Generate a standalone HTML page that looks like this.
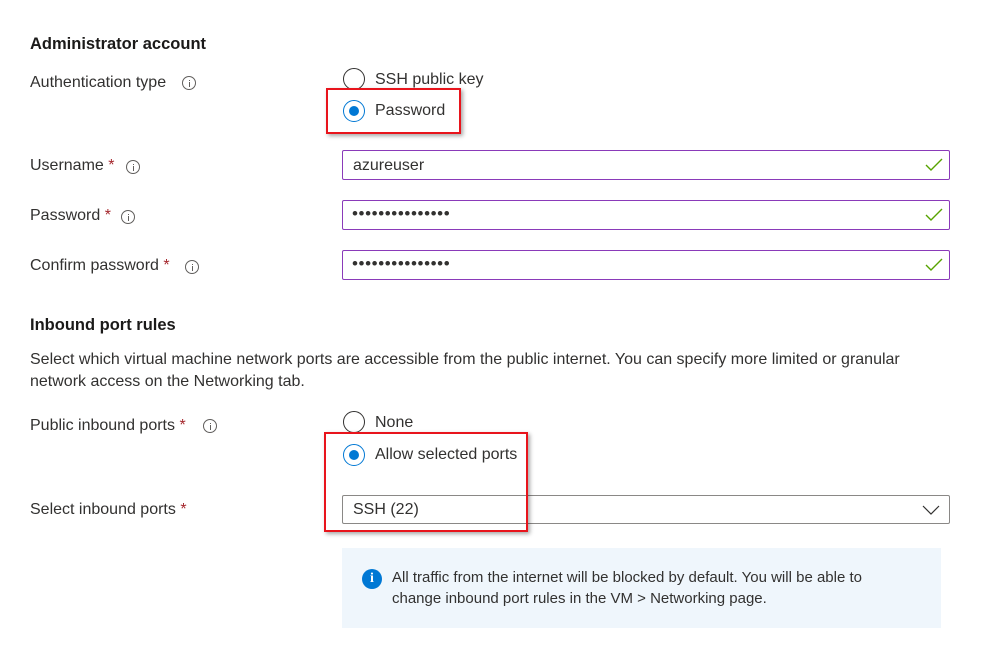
<!DOCTYPE html>
<html><head><meta charset="utf-8"><style>
*{margin:0;padding:0;box-sizing:border-box}
body{width:983px;height:652px;background:#fff;position:relative;overflow:hidden;font-family:"Liberation Sans",sans-serif;font-size:16px;color:#323130}
.a{position:absolute;white-space:nowrap;line-height:20px}
.h{font-weight:bold;font-size:16.5px;color:#1b1a19}
.req{color:#a4262c}
.info{position:absolute;width:14px;height:14px;border:1px solid #605e5c;border-radius:50%}
.info:after{content:"";position:absolute;left:5.5px;top:5px;width:1px;height:5px;background:#605e5c}
.info:before{content:"";position:absolute;left:5.5px;top:2.5px;width:1px;height:1px;background:#605e5c}
.rad{position:absolute;width:22px;height:22px;border:1px solid #323130;border-radius:50%}
.rad.on{border-color:#0078d4}
.rad.on:after{content:"";position:absolute;left:5px;top:5px;width:10px;height:10px;border-radius:50%;background:#0078d4}
.inp{position:absolute;left:342px;width:608px;height:30px;border:1px solid #8a3ab9;border-radius:2px}
.inp span{position:absolute;left:10px;top:5px}
.inp span.d{font-size:17px;letter-spacing:0.6px;top:3px;left:9px}
.inp svg{position:absolute;right:6px;top:7px}
.red{position:absolute;border:2px solid #e8141c;box-shadow:2px 2px 4px rgba(0,0,0,.35)}
</style></head><body>
<div class="a h" style="left:30px;top:34px">Administrator account</div>
<div class="a" style="left:30px;top:73px">Authentication type</div>
<div class="info" style="left:182px;top:76px"></div>
<div class="rad" style="left:343px;top:68px"></div>
<div class="a" style="left:375px;top:70px">SSH public key</div>
<div class="rad on" style="left:343px;top:100px"></div>
<div class="a" style="left:375px;top:101px">Password</div>
<div class="red" style="left:326px;top:88px;width:135px;height:46px"></div>

<div class="a" style="left:30px;top:156px">Username <span class="req">*</span></div>
<div class="info" style="left:126px;top:160px"></div>
<div class="inp" style="top:150px"><span style="top:6px">azureuser</span><svg width="18" height="14"><path d="M1 7 L6 12 L17 1" fill="none" stroke="#57a300" stroke-width="1.4"/></svg></div>

<div class="a" style="left:30px;top:206px">Password <span class="req">*</span></div>
<div class="info" style="left:121px;top:210px"></div>
<div class="inp" style="top:200px"><span class="d">•••••••••••••••</span><svg width="18" height="14"><path d="M1 7 L6 12 L17 1" fill="none" stroke="#57a300" stroke-width="1.4"/></svg></div>

<div class="a" style="left:30px;top:256px">Confirm password <span class="req">*</span></div>
<div class="info" style="left:185px;top:260px"></div>
<div class="inp" style="top:250px"><span class="d">•••••••••••••••</span><svg width="18" height="14"><path d="M1 7 L6 12 L17 1" fill="none" stroke="#57a300" stroke-width="1.4"/></svg></div>

<div class="a h" style="left:30px;top:315px">Inbound port rules</div>
<div class="a" style="left:30px;top:350px">Select which virtual machine network ports are accessible from the public internet. You can specify more limited or granular</div>
<div class="a" style="left:30px;top:372px">network access on the Networking tab.</div>

<div class="a" style="left:30px;top:416px">Public inbound ports <span class="req">*</span></div>
<div class="info" style="left:203px;top:419px"></div>
<div class="rad" style="left:343px;top:411px"></div>
<div class="a" style="left:375px;top:413px">None</div>
<div class="rad on" style="left:343px;top:444px"></div>
<div class="a" style="left:375px;top:445px">Allow selected ports</div>

<div class="a" style="left:30px;top:500px">Select inbound ports <span class="req">*</span></div>
<div class="inp" style="top:495px;height:29px;border-color:#8a8886"><span style="top:5px">SSH (22)</span><svg width="18" height="12" style="right:9px;top:8px"><path d="M1 2 L9 10 L17 2" fill="none" stroke="#323130" stroke-width="1.2"/></svg></div>
<div class="red" style="left:324px;top:432px;width:204px;height:100px"></div>

<div style="position:absolute;left:342px;top:548px;width:599px;height:80px;background:#eff6fc"></div>
<div style="position:absolute;left:362px;top:569px;width:20px;height:20px;border-radius:50%;background:#0078d4;color:#fff;font-weight:bold;font-size:14px;text-align:center;line-height:20px;font-family:'Liberation Serif',serif">i</div>
<div class="a" style="left:392px;top:568px;font-size:15px">All traffic from the internet will be blocked by default. You will be able to</div>
<div class="a" style="left:392px;top:589px;font-size:15px">change inbound port rules in the VM &gt; Networking page.</div>
</body></html>
